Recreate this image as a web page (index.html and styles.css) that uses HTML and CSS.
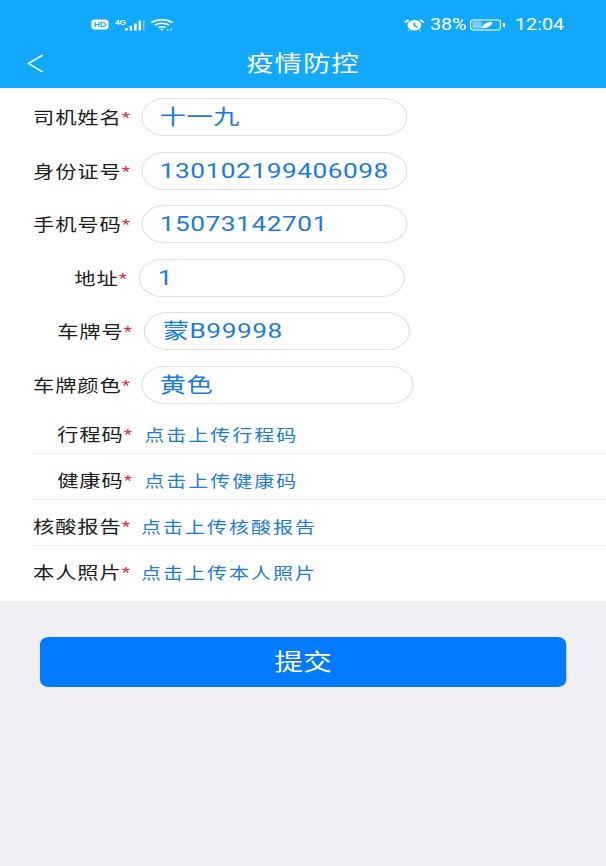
FILE: index.html
```html
<!DOCTYPE html>
<html lang="zh-CN">
<head>
<meta charset="utf-8">
<title>疫情防控</title>
<link rel="stylesheet" href="styles.css">
</head>
<body>
<div class="app">
  <header class="top">
    <div class="status">
      <div class="status-left">
        <svg class="ic-hd" viewBox="0 0 14 11"><rect x="0" y="0.5" width="14" height="10" rx="3" fill="#fff"/><text x="7" y="8.2" text-anchor="middle" class="hd-text">HD</text></svg>
        <svg class="ic-signal" viewBox="0 0 26 12" preserveAspectRatio="none"><text x="0" y="5.5" class="net-text">4G</text><rect x="8" y="9" width="2" height="2.5" fill="#fff"/><rect x="11.5" y="7" width="2" height="4.5" fill="#fff"/><rect x="15" y="4.5" width="2" height="7" fill="#fff"/><rect x="18.5" y="1.5" width="2" height="10" fill="#fff"/><rect x="22" y="1.5" width="1.2" height="10" fill="#fff" opacity=".45"/></svg>
        <svg class="ic-wifi" viewBox="0 0 18 12" preserveAspectRatio="none" fill="none" stroke="#fff" stroke-width="1.5"><path d="M1 3.6C5.5-.2 12.5-.2 17 3.6"/><path d="M3.6 6.2c3.2-2.5 7.6-2.5 10.8 0"/><path d="M6.3 8.6c1.6-1 3.8-1 5.4 0"/><circle cx="9" cy="10.6" r="1" fill="#fff" stroke="none"/><circle cx="13.5" cy="10.8" r=".7" fill="#fff" stroke="none"/><circle cx="16" cy="10.8" r=".7" fill="#fff" stroke="none"/></svg>
      </div>
      <div class="status-right">
        <svg class="ic-alarm" viewBox="0 0 16 12" preserveAspectRatio="none"><circle cx="8" cy="6.3" r="5.2" fill="#fff"/><path d="M8 3.5V6.6L10.4 8.4" fill="none" stroke="#12a8fb" stroke-width="1.3"/><path d="M1 3.4 3.6.9M15 3.4 12.4.9" stroke="#fff" stroke-width="1.8"/><path d="M4.2 11.4 3.2 12M11.8 11.4 12.8 12" stroke="#fff" stroke-width="1"/></svg>
        <span class="pct">38%</span>
        <svg class="ic-batt" viewBox="0 0 28 12" preserveAspectRatio="none"><rect x=".5" y="1" width="23" height="10" rx="2" fill="none" stroke="#fff" stroke-width=".9"/><rect x="2" y="2.5" width="7" height="7" rx=".8" fill="#fff" opacity=".45"/><path d="M9 9.2c.5-4 4.5-6.3 8.4-6.4-.3 3.8-3.6 6.6-8.4 6.4z" fill="#fff"/><rect x="25.4" y="4" width="1.6" height="4" rx=".6" fill="#fff"/></svg>
        <span class="clock">12:04</span>
      </div>
    </div>
    <div class="nav">
      <svg class="back" viewBox="0 0 16 22" fill="none" stroke="#fff" stroke-width="1.5"><path d="M14 2 2 11 14 20"/></svg>
      <h1 class="title">疫情防控</h1>
    </div>
  </header>

  <main class="form">
    <div class="row"><label class="lab">司机姓名<i>*</i></label><div class="pill">十一九</div></div>
    <div class="row"><label class="lab">身份证号<i>*</i></label><div class="pill">130102199406098</div></div>
    <div class="row"><label class="lab">手机号码<i>*</i></label><div class="pill">15073142701</div></div>
    <div class="row"><label class="lab lab-s">地址<i>*</i></label><div class="pill">1</div></div>
    <div class="row"><label class="lab lab-w">车牌号<i>*</i></label><div class="pill">蒙B99998</div></div>
    <div class="row"><label class="lab">车牌颜色<i>*</i></label><div class="pill pill-w">黄色</div></div>

    <div class="uploads">
      <div class="up"><span class="lab lab-w">行程码<i>*</i></span><a class="link">点击上传行程码</a></div>
      <div class="up"><span class="lab lab-w">健康码<i>*</i></span><a class="link">点击上传健康码</a></div>
      <div class="up up-n"><span class="lab">核酸报告<i>*</i></span><a class="link">点击上传核酸报告</a></div>
      <div class="up up-n up-last"><span class="lab">本人照片<i>*</i></span><a class="link">点击上传本人照片</a></div>
    </div>
  </main>

  <div class="actions"><button class="submit">提交</button></div>
</div>
</body>
</html>
```

FILE: styles.css
```css
* { box-sizing: border-box; }
html, body { margin: 0; padding: 0; height: 100%; overflow: hidden; background: #efeff4; }
body { font-family: "Noto Sans CJK SC", "Roboto", sans-serif; }

/* The reference is a phone capture stretched sideways: layout is done at 1/1.25 width. */
.app {
  width: 484.8px;
  height: 866px;
  transform: scaleX(1.25);
  transform-origin: 0 0;
  background: #efeff4;
}

.top { height: 88px; padding-bottom: 14px; background: #12a8fb; color: #fff; }
.status { height: 48px; padding: 1px 33.5px 0 72.5px; display: flex; justify-content: space-between; align-items: center; }
.status-left, .status-right { display: flex; align-items: center; }
.ic-hd { width: 14px; height: 11px; margin-right: 5.5px; }
.hd-text { font: 700 7px "Liberation Sans", sans-serif; fill: #12a8fb; }
.net-text { font: 700 6.5px "Liberation Sans", sans-serif; fill: #fff; }
.ic-signal { width: 26.5px; height: 12px; margin-right: 1.5px; }
.ic-wifi { width: 19px; height: 12px; }
.ic-alarm { width: 17px; height: 12px; margin-right: 3.5px; }
.pct, .clock { font: 400 15.8px "Roboto", sans-serif; line-height: 18px; }
.pct { margin-right: 3.2px; }
.ic-batt { width: 29px; height: 12px; margin-right: 6.5px; }

.nav { height: 26px; position: relative; display: flex; justify-content: center; align-items: center; }
.title { margin: 0; font-size: 22px; font-weight: 400; line-height: 26px; letter-spacing: .7px; }
.back { position: absolute; left: 21px; top: 4.5px; width: 15px; height: 21px; }

.form { background: #fff; height: 513px; padding-top: 10px; }
.row { height: 53.6px; display: flex; align-items: flex-start; padding-left: 26.4px; }
.lab { flex: none; display: block; width: 76px; font-size: 17px; line-height: 38px; color: #1c1c1c; text-align: right; white-space: nowrap; letter-spacing: .75px; }
.lab i { font-style: normal; color: #e8213a; font-family: "Liberation Sans", sans-serif; font-size: 17px; letter-spacing: 0; margin-right: -.8px; }
.lab-s { width: 74.4px; }
.lab-w { width: 78.4px; }

.pill {
  margin-left: 10.4px;
  width: 212.8px;
  height: 38px;
  border: 1.6px solid #e0e0e0;
  border-radius: 19px;
  padding-left: 14px;
  color: #1b7bdc;
  font-size: 21px;
  line-height: 37px;
  font-family: "Roboto", "Noto Sans CJK SC", sans-serif;
  letter-spacing: .42px;
  white-space: nowrap;
}
.pill-w { width: 218.4px; }

.uploads { padding-left: 26.4px; margin-top: -11.6px; }
.up { display: flex; align-items: flex-start; border-bottom: 1px solid #f0f0f0; height: 46px; padding-top: 11px; }
.up-last { border-bottom: 0; height: 56px; }
.up .lab { line-height: 30px; }
.link { color: #1b7bdc; font-size: 16px; line-height: 30px; margin-left: 10.6px; letter-spacing: 1.6px; white-space: nowrap; }
.up-n .link { margin-left: 10.4px; }

.actions { padding: 36px 32px 0; }
.submit {
  display: block;
  width: 420.8px;
  height: 50px;
  border: 0;
  border-radius: 7px;
  background: #007aff;
  color: #fff;
  font: 400 23px/46px "Noto Sans CJK SC", sans-serif;
  padding: 0 0 4px;
}
```
